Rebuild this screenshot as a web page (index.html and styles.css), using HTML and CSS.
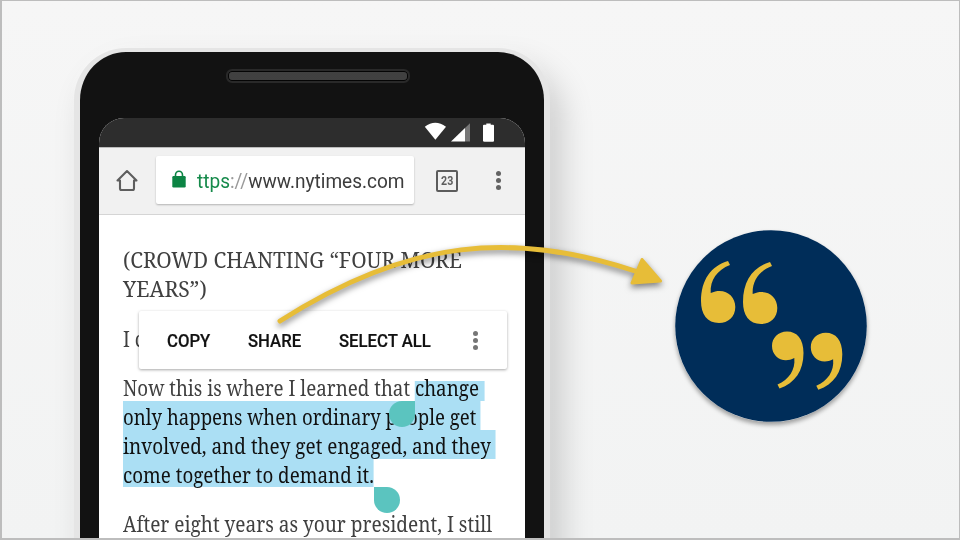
FILE: index.html
```html
<!DOCTYPE html>
<html lang="en">
<head>
<meta charset="utf-8">
<title>Share a quote</title>
<link rel="stylesheet" href="styles.css">
</head>
<body>
<main class="stage">
  <section class="phone">
    <div class="speaker"></div>
    <div class="screen">
      <div class="status">
        <svg class="status-icons" viewBox="0 0 72 22" width="72" height="22">
          <path fill="#fff" d="M.8 4.800Q11.200-3.200 22 4.800L11.400 17.800Z"/>
          <path fill="#fff" d="M27 19.500L41 6V19.500Z"/>
          <path fill="#777" d="M41 6L46 1.300V19.500H41Z"/>
          <path fill="#fff" d="M60 2.700h2.300V1.500h4.400V2.700H69q1 0 1 1v15q0 1-1 1h-8.500q-1.500 0-1.500-1V3.700q0-1 1-1Z"/>
        </svg>
      </div>
      <div class="toolbar">
        <svg class="home" viewBox="0 0 24 24" width="24" height="24"><path fill="none" stroke="#5e5e5e" stroke-width="2.100" stroke-linejoin="round" stroke-linecap="round" d="M5 12.500H2.500L12 3 21.500 12.500H19V20.500Q19 22 17.500 22H6.500Q5 22 5 20.500Z"/></svg>
        <div class="address">
          <svg class="lock" viewBox="0 0 14 18" width="14" height="18"><path fill="none" stroke="#0c8444" stroke-width="1.600" d="M3.500 8V5a3.500 3.800 0 0 1 7 0V8"/><rect x=".3" y="6" width="13.400" height="11.500" rx="1.200" fill="#0c8444"/></svg>
          <span class="url"><span class="secure">ttps</span><span class="slashes">://</span>www.nytimes.com</span>
        </div>
        <div class="tabs"><span>23</span></div>
        <div class="dots"><i></i><i></i><i></i></div>
      </div>
      <article class="article">
        <p class="chant"><span class="line crowd">(CROWD CHANTING “FOUR MORE</span><span class="line years">YEARS”)</span></p>
        <p><span class="line">I c</span></p>
        <p class="quote">
          <span class="line now">Now this is where I learned that <mark class="first">change</mark></span>
          <mark class="line only">only happens when ordinary people get</mark>
          <mark class="line involved">involved, and they get engaged, and they</mark>
          <mark class="line come">come together to demand it.</mark>
        </p>
        <p><span class="line after">After eight years as your president, I still</span></p>
        <b class="handle start"></b>
        <b class="handle end"></b>
        <div class="menu">
          <span class="copy">COPY</span><span class="share">SHARE</span><span class="all">SELECT ALL</span>
          <div class="dots"><i></i><i></i><i></i></div>
        </div>
      </article>
    </div>
  </section>
  <section class="badge">
    <svg viewBox="0 0 192 192" width="192" height="192">
      <circle cx="96" cy="96" r="95.800" fill="#002d59"/>
      <g fill="#e7bd38">
        <path id="open" d="M53 31L55 35C42 40 35 50 35.700 63C49 57 60.300 65 60.300 77C60.300 87 53 93 44 93C32 93 26 84 26 71C26 50 36 36 53 31Z"/>
        <use href="#open" x="42" y="1"/>
        <path id="close" d="M102.500 154.500L104.500 158.500C120 153 128.500 141 128.500 123C128.500 109 122 101.500 112 101.500C103 101.500 97 108 97 116C97 127 108 134 119.300 128C120.500 140 114 149.500 102.500 154.500Z"/>
        <use href="#close" x="38.800" y="1.200"/>
      </g>
    </svg>
  </section>
  <svg class="arrow" viewBox="0 0 960 540" width="960" height="540">
    <path fill="none" stroke="#e7bd38" stroke-width="5" stroke-linecap="round" d="M280 321C410 238 515 231 635 271"/>
    <path fill="#e7bd38" stroke="#e7bd38" stroke-width="3" stroke-linejoin="round" d="M642 259.500L660.500 281 632 283Z"/>
  </svg>
</main>
</body>
</html>
```
FILE: styles.css
```css
* { box-sizing: border-box; }
body { margin: 0; }
.stage {
  position: relative;
  display: flex;
  align-items: flex-start;
  width: 960px;
  height: 540px;
  overflow: hidden;
  background: linear-gradient(#f6f6f6, #f2f3f3);
}
.stage::after {
  content: "";
  position: absolute;
  inset: 0;
  border: 2px solid #bdbdbd;
  border-right-width: 1px;
  border-top-width: 1px;
}
.phone {
  flex: none;
  display: flex;
  flex-direction: column;
  align-items: center;
  width: 476px;
  height: 620px;
  margin: 48px 0 0 74px;
  padding-top: 17px;
  border: solid #e5e5e5;
  border-width: 4px 6px 0;
  border-radius: 52px 52px 0 0;
  background: #121212;
  box-shadow: 12px 18px 32px rgba(0, 0, 0, .17), 0 0 9px rgba(255, 255, 255, .5);
}
.speaker {
  flex: none;
  width: 184px;
  height: 14px;
  margin-left: 12px;
  border: 2px solid #292929;
  border-radius: 6px;
  background: radial-gradient(circle, #484848 .6px, #2c2c2c 1px) 0 0 / 2px 2px;
  box-shadow: inset 0 0 0 1px #050505;
}
.screen {
  width: 426px;
  height: 500px;
  margin-top: 35px;
  border-radius: 25px 25px 0 0;
  overflow: hidden;
  background: #fff;
}
.status {
  display: flex;
  justify-content: flex-end;
  height: 29px;
  padding: 4px 29px 0 0;
  background: #2d2d2d;
}
.toolbar {
  display: flex;
  align-items: center;
  height: 68px;
  padding: 0 24px 2px 16px;
  border-top: 1px solid #bbb;
  border-bottom: 1px solid #d5d5d5;
  background: #f1f1f1;
  font-family: Roboto, sans-serif;
}
.home { flex: none; }
.address {
  flex: none;
  display: flex;
  align-items: center;
  width: 258px;
  height: 48px;
  margin-left: 17px;
  padding-left: 16px;
  border-radius: 2px;
  background: #fff;
  box-shadow: 0 1px 2px rgba(0, 0, 0, .25);
}
.lock { flex: none; margin-top: -2px; }
.url {
  margin: 1px 0 0 11px;
  color: #3c3c3c;
  font-size: 20px;
  line-height: 24px;
  white-space: nowrap;
  transform: scaleX(.952);
  transform-origin: 0 0;
}
.secure { color: #168a4b; }
.slashes { color: #9a9a9a; }
.tabs {
  flex: none;
  display: flex;
  justify-content: center;
  width: 22px;
  height: 22px;
  margin: 1px 0 0 22px;
  border: 2px solid #5c5c5c;
  border-radius: 2px;
  color: #5c5c5c;
  font-size: 12.500px;
  font-weight: 700;
  line-height: 18px;
}
.tabs span { transform: scaleX(.85); }
.dots {
  display: flex;
  flex-direction: column;
  gap: 2px;
}
.dots i {
  width: 5px;
  height: 5px;
  border-radius: 50%;
  background: #636363;
}
.toolbar .dots { margin-left: 38px; }
.article {
  position: relative;
  padding: 30px 0 0 24px;
  color: #404040;
  font: 21px/32px "Noto Serif", "Liberation Serif", serif;
}
.article p { margin: 0 0 20px; }
.chant { line-height: 30px; }
.line {
  display: block;
  width: max-content;
  height: 29px;
  white-space: nowrap;
  transform: scaleX(.895);
  transform-origin: 0 0;
}
.crowd { transform: scaleX(.989); }
.years { transform: scaleX(1.01); }
.only { transform: scaleX(.887); }
.involved { transform: scaleX(.902); }
.after { transform: scaleX(.907); }
mark { color: #111; background: #abdff4; }
.quote mark.line { padding-right: 5px; }
.quote mark.come { height: 28px; padding-right: 0; margin-bottom: 21px; }
.now { display: flex; white-space: pre; }
.first {
  height: 20px;
  margin-top: 9px;
  padding-right: 6px;
  line-height: 14px;
}
.handle {
  position: absolute;
  width: 26px;
  height: 26px;
  background: #5bc4bf;
}
.start { left: 290px; top: 186px; border-radius: 50% 0 50% 50%; }
.end { left: 275px; top: 272px; border-radius: 0 50% 50% 50%; }
.menu {
  position: absolute;
  left: 40px;
  top: 96px;
  display: flex;
  align-items: center;
  width: 368px;
  height: 58px;
  padding: 2px 0 0 28px;
  border-radius: 2px;
  background: #fff;
  box-shadow: 0 1px 3px rgba(0, 0, 0, .35);
  color: #111;
  font: 500 17.500px/24px Roboto, sans-serif;
  white-space: nowrap;
}
.menu span {
  flex: none;
  transform: scaleX(.955);
  transform-origin: 0 0;
  -webkit-text-stroke: .2px #111;
}
.copy { width: 81px; }
.share { width: 91px; }
.all { width: 134px; }
.menu .dots { margin-top: -2px; }
.menu .dots i { background: #767676; }
.badge {
  flex: none;
  width: 192px;
  height: 192px;
  margin: 230px 0 0 125px;
  border-radius: 50%;
  box-shadow: 0 3px 4px rgba(0, 0, 0, .35);
}
.badge svg { display: block; }
.arrow {
  position: absolute;
  inset: 0;
  filter: drop-shadow(0 3px 3px rgba(0, 0, 0, .5));
}
```
